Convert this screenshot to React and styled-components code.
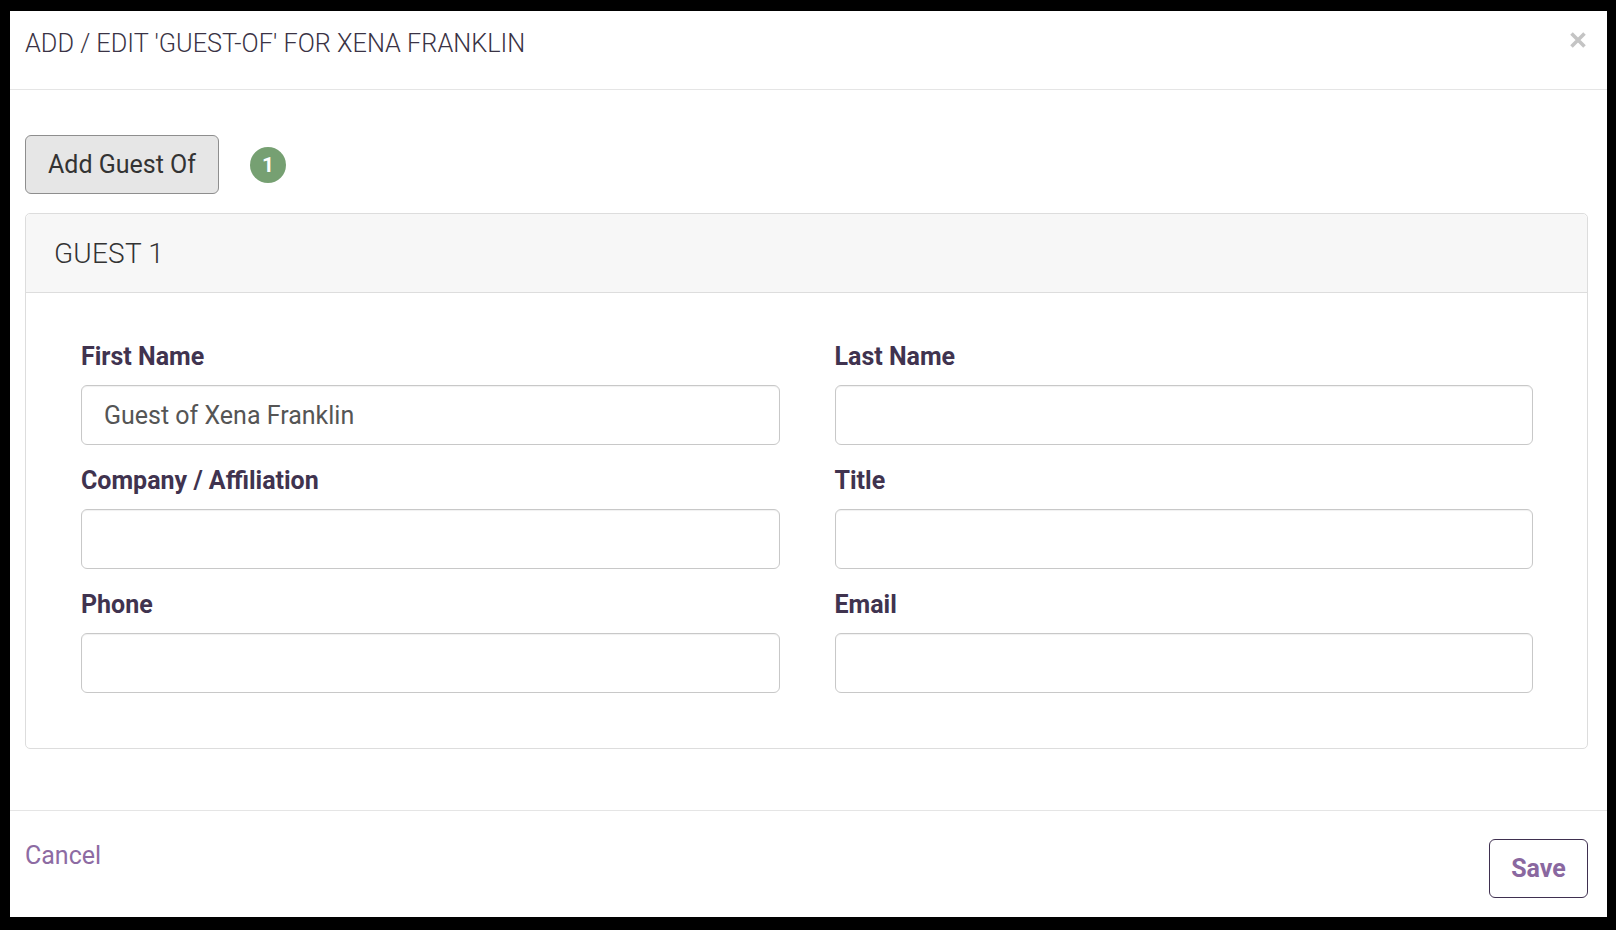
import React from "react";
import styled, { createGlobalStyle } from "styled-components";

const Global = createGlobalStyle`
  html, body { margin: 0; padding: 0; background: #000; }
  body { font-family: Roboto, "Liberation Sans", Arial, sans-serif; }
  * { box-sizing: border-box; }
`;

const Frame = styled.div`
  width: 1616px;
  height: 930px;
  padding: 11px 9px 13px 10px;
  background: #000;
`;

const Modal = styled.div`
  height: 906px;
  background: #fff;
  display: flex;
  flex-direction: column;
`;

const Header = styled.div`
  display: flex;
  align-items: flex-start;
  justify-content: space-between;
  padding: 18px 20px 0 15px;
  height: 79px;
  border-bottom: 1px solid #e5e5e5;
`;

const Title = styled.h4`
  margin: 0;
  font-size: 25.3px;
  line-height: 30px;
  font-weight: 300;
  color: #3a3345;
`;

const Close = styled.button`
  border: 0;
  background: none;
  padding: 0;
  margin-top: 2px;
  width: 18px;
  height: 18px;
  cursor: pointer;
  display: flex;
`;

const Body = styled.div`
  flex: 1;
  padding: 45px 19px 0 15px;
`;

const Toolbar = styled.div`
  display: flex;
  align-items: center;
  gap: 31px;
  margin-bottom: 19px;
`;

const GrayButton = styled.button`
  height: 59px;
  padding: 0 22px;
  font-family: inherit;
  font-size: 25px;
  color: #333;
  background: #e6e6e6;
  border: 1px solid #8e8e8e;
  border-radius: 6px;
`;

const Badge = styled.span`
  width: 36px;
  height: 36px;
  border-radius: 50%;
  background: #76a072;
  color: #fff;
  font-weight: 700;
  font-size: 21px;
  display: flex;
  align-items: center;
  justify-content: center;
`;

const Card = styled.div`
  border: 1px solid #ddd;
  border-radius: 5px;
  background: #fff;
`;

const CardHeader = styled.div`
  height: 79px;
  padding: 0 28px;
  display: flex;
  align-items: center;
  background: #f7f7f7;
  border-bottom: 1px solid #ddd;
  border-radius: 5px 5px 0 0;
  font-size: 28px;
  font-weight: 300;
  color: #333;
  letter-spacing: 0.2px;
`;

const CardBody = styled.div`
  padding: 50px 54px 33px 55px;
  display: grid;
  grid-template-columns: 1fr 1fr;
  column-gap: 55px;
`;

const Field = styled.div`
  display: flex;
  flex-direction: column;
  margin-bottom: 22px;
`;

const Label = styled.label`
  font-size: 25px;
  line-height: 28px;
  font-weight: 700;
  color: #40334f;
  margin-bottom: 14px;
`;

const Input = styled.input`
  height: 60px;
  width: 100%;
  padding: 0 22px;
  font-family: inherit;
  font-size: 25px;
  color: #555;
  border: 1px solid #c8c8c8;
  border-radius: 6px;
  box-shadow: inset 0 1px 1px rgba(0, 0, 0, 0.06);
  outline: none;
`;

const Footer = styled.div`
  height: 107px;
  border-top: 1px solid #e5e5e5;
  padding: 28px 19px 0 15px;
  display: flex;
  justify-content: space-between;
  align-items: flex-start;
`;

const LinkButton = styled.a`
  font-size: 25px;
  line-height: 30px;
  margin-top: 2px;
  color: #8d6ba3;
  text-decoration: none;
  cursor: pointer;
`;

const OutlineButton = styled.button`
  height: 59px;
  width: 99px;
  font-family: inherit;
  font-size: 25px;
  font-weight: 700;
  color: #8a68a0;
  background: #fff;
  border: 1px solid #3f3050;
  border-radius: 6px;
`;

const fields = [
  { label: "First Name", value: "Guest of Xena Franklin" },
  { label: "Last Name", value: "" },
  { label: "Company / Affiliation", value: "" },
  { label: "Title", value: "" },
  { label: "Phone", value: "" },
  { label: "Email", value: "" },
];

export default function App() {
  return (
    <Frame>
      <Global />
      <Modal>
        <Header>
          <Title>ADD / EDIT 'GUEST-OF' FOR XENA FRANKLIN</Title>
          <Close aria-label="Close">
            <svg width="18" height="18" viewBox="0 0 18 18">
              <path d="M2.5 2.5 L15.5 15.5 M15.5 2.5 L2.5 15.5" stroke="#c4c4c4" strokeWidth="3.6" strokeLinecap="butt" />
            </svg>
          </Close>
        </Header>
        <Body>
          <Toolbar>
            <GrayButton>Add Guest Of</GrayButton>
            <Badge>1</Badge>
          </Toolbar>
          <Card>
            <CardHeader>GUEST 1</CardHeader>
            <CardBody>
              {fields.map((f) => (
                <Field key={f.label}>
                  <Label>{f.label}</Label>
                  <Input defaultValue={f.value} />
                </Field>
              ))}
            </CardBody>
          </Card>
        </Body>
        <Footer>
          <LinkButton>Cancel</LinkButton>
          <OutlineButton>Save</OutlineButton>
        </Footer>
      </Modal>
    </Frame>
  );
}
